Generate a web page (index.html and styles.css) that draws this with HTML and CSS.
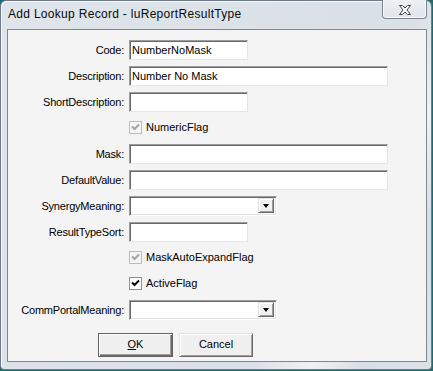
FILE: index.html
```html
<!DOCTYPE html>
<html>
<head>
<meta charset="utf-8">
<link rel="stylesheet" href="styles.css">
</head>
<body>
<div class="window">
  <div class="titlebar">
    <span class="title">Add Lookup Record - luReportResultType</span>
    <div class="close">
      <svg width="14" height="10" viewBox="0 0 14 10"><path d="M1.5 0.5 H4.5 L7 3 L9.5 0.5 H12.5 L9 5 L12.5 9.5 H9.5 L7 7 L4.5 9.5 H1.5 L5 5 Z" fill="#ffffff" stroke="#3c4450" stroke-width="1"/></svg>
    </div>
  </div>
  <div class="client">
    <div class="form">
      <label class="lbl">Code:</label>
      <div class="field short">NumberNoMask</div>

      <label class="lbl">Description:</label>
      <div class="field long">Number No Mask</div>

      <label class="lbl">ShortDescription:</label>
      <div class="field short"></div>

      <span></span>
      <div class="check disabled"><span class="box"><svg width="9" height="9" viewBox="0 0 9 9"><path d="M1 3.5 L3.5 6 L8 1.5" fill="none" stroke="#a3a3a3" stroke-width="2"/></svg></span><span class="ctext">NumericFlag</span></div>

      <label class="lbl">Mask:</label>
      <div class="field long"></div>

      <label class="lbl">DefaultValue:</label>
      <div class="field long"></div>

      <label class="lbl">SynergyMeaning:</label>
      <div class="combo"><span class="ctxt"></span><span class="drop"><span class="tri"></span></span></div>

      <label class="lbl">ResultTypeSort:</label>
      <div class="field short"></div>

      <span></span>
      <div class="check disabled"><span class="box"><svg width="9" height="9" viewBox="0 0 9 9"><path d="M1 3.5 L3.5 6 L8 1.5" fill="none" stroke="#a3a3a3" stroke-width="2"/></svg></span><span class="ctext">MaskAutoExpandFlag</span></div>

      <span></span>
      <div class="check"><span class="box"><svg width="9" height="9" viewBox="0 0 9 9"><path d="M1 3.5 L3.5 6 L8 1.5" fill="none" stroke="#000000" stroke-width="2"/></svg></span><span class="ctext">ActiveFlag</span></div>

      <label class="lbl">CommPortalMeaning:</label>
      <div class="combo"><span class="ctxt"></span><span class="drop"><span class="tri"></span></span></div>
    </div>
    <div class="buttons">
      <div class="btn default"><span class="ul">O</span>K</div>
      <div class="btn">Cancel</div>
    </div>
  </div>
</div>
</body>
</html>
```

FILE: styles.css
```css
html, body {
  margin: 0;
  padding: 0;
}
body {
  width: 433px;
  height: 371px;
  background: #1b6f72;
  overflow: hidden;
  font-family: "Liberation Sans", Arial, sans-serif;
  font-size: 11px;
  color: #000;
}
.window {
  box-sizing: border-box;
  width: 432px;
  height: 370px;
  border: 1px solid #6f7b86;
  border-radius: 6px 6px 4px 4px;
  padding: 0 4px 7px 6px;
  background: linear-gradient(115deg, #dfe5ea 0%, #d9e0e6 70%, #eef2f4 80%, #d8dfe5 88%, #dbe2e8 100%);
  box-shadow: inset 1px 1px 0 #f4f7f9;
  display: flex;
  flex-direction: column;
}
.titlebar {
  height: 28px;
  display: flex;
  justify-content: space-between;
  align-items: flex-start;
  flex: none;
}
.title {
  margin-left: 1px;
  margin-top: 5px;
  font-size: 12px;
  line-height: 16px;
  letter-spacing: 0.3px;
  color: #0a0a0a;
}
.close {
  margin-top: -1px;
  width: 45px;
  height: 19px;
  box-sizing: border-box;
  border: 1px solid #7c858f;
  border-top: none;
  border-radius: 0 0 4px 4px;
  background: linear-gradient(#eef1f4, #dfe4e9);
  box-shadow: inset 1px 0 0 #f8fafb, inset -1px -1px 0 #f8fafb;
  display: flex;
  align-items: center;
  justify-content: center;
}
.close svg {
  display: block;
  margin-top: 1px;
}
.client {
  flex: 1;
  box-sizing: border-box;
  border: 1px solid #82878c;
  background: #f4f4f4;
  padding: 10px 0 0 0;
}
.form {
  display: grid;
  grid-template-columns: 116px auto;
  grid-auto-rows: 20px;
  column-gap: 5px;
  row-gap: 6px;
  justify-items: start;
}
.lbl {
  justify-self: end;
  line-height: 20px;
  white-space: nowrap;
  letter-spacing: -0.2px;
}
.field {
  box-sizing: border-box;
  height: 20px;
  background: #fff;
  border-style: solid;
  border-width: 1px;
  border-color: #9c9c9c #e6e6e6 #e6e6e6 #9c9c9c;
  box-shadow: inset 1px 1px 0 #6a6a6a;
  padding: 0 0 0 2px;
  line-height: 18px;
  white-space: nowrap;
}
.short { width: 119px; }
.long { width: 259px; }
.combo {
  box-sizing: border-box;
  width: 148px;
  height: 20px;
  background: #fff;
  border-style: solid;
  border-width: 1px;
  border-color: #9c9c9c #ffffff #ffffff #9c9c9c;
  box-shadow: inset 1px 1px 0 #696969, inset -1px -1px 0 #e3e3e3;
  padding: 2px;
  display: flex;
  justify-content: flex-end;
}
.drop {
  box-sizing: border-box;
  width: 16px;
  height: 15px;
  background: #f0f0f0;
  border-style: solid;
  border-width: 1px;
  border-color: #e3e3e3 #696969 #696969 #e3e3e3;
  box-shadow: inset 1px 1px 0 #fff, inset -1px -1px 0 #a0a0a0;
  display: flex;
  align-items: center;
  justify-content: center;
  margin-top: -1px;
}
.tri {
  width: 0;
  height: 0;
  border-left: 3.5px solid transparent;
  border-right: 3.5px solid transparent;
  border-top: 4px solid #000;
  margin-top: 1px;
}
.check {
  display: flex;
  align-items: center;
  gap: 4px;
  height: 20px;
  margin-top: -1px;
}
.box {
  box-sizing: border-box;
  width: 13px;
  height: 13px;
  border: 1px solid #8e8f8f;
  background: #fff;
  display: flex;
  align-items: center;
  justify-content: center;
}
.check.disabled .box {
  border-color: #bcbcbc;
  background: #f4f4f4;
}
.ctext {
  line-height: 20px;
  white-space: nowrap;
}
.buttons {
  display: flex;
  gap: 6px;
  padding-left: 90px;
  margin-top: 13px;
}
.btn {
  box-sizing: border-box;
  width: 74px;
  height: 24px;
  background: #f0f0f0;
  border-style: solid;
  border-width: 1px;
  border-color: #e3e3e3 #696969 #696969 #e3e3e3;
  box-shadow: inset 1px 1px 0 #fff, inset -1px -1px 0 #a0a0a0;
  text-align: center;
  line-height: 21px;
}
.btn.default {
  width: 75px;
  border-color: #646464;
  box-shadow: inset 1px 1px 0 #ffffff, inset -1px -1px 0 #696969, inset -2px -2px 0 #a0a0a0;
}
.ul {
  text-decoration: underline;
}
```
